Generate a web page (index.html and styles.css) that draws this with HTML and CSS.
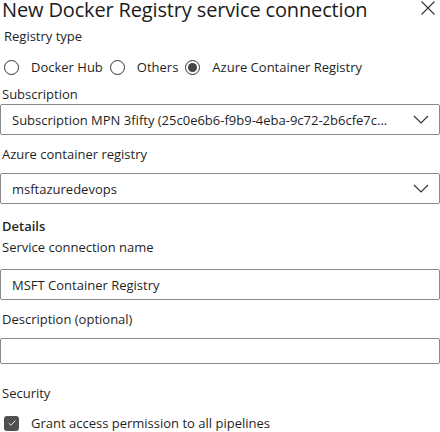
FILE: index.html
```html
<!DOCTYPE html>
<html>
<head>
<meta charset="utf-8">
<link rel="stylesheet" href="styles.css">
</head>
<body>
<div class="panel">
  <div class="header">
    <h1 class="title">New Docker Registry service connection</h1>
    <svg class="close" width="16" height="16" viewBox="0 0 16 16"><path d="M1.5 1.5L14.5 14.5M14.5 1.5L1.5 14.5" stroke="#333" stroke-width="1.1" fill="none"/></svg>
  </div>
  <div class="label reg-type">Registry type</div>
  <div class="radios">
    <span class="radio"></span><span class="radio-text">Docker Hub</span>
    <span class="radio"></span><span class="radio-text">Others</span>
    <span class="radio checked"></span><span class="radio-text">Azure Container Registry</span>
  </div>
  <div class="label sub-label">Subscription</div>
  <div class="field sub-field">
    <span class="value">Subscription MPN 3fifty (25c0e6b6-f9b9-4eba-9c72-2b6cfe7c...</span>
    <svg class="chev" width="16" height="9" viewBox="0 0 16 9"><path d="M1 1L8 8L15 1" stroke="#333" stroke-width="1.2" fill="none"/></svg>
  </div>
  <div class="label acr-label">Azure container registry</div>
  <div class="field acr-field">
    <span class="value">msftazuredevops</span>
    <svg class="chev" width="16" height="9" viewBox="0 0 16 9"><path d="M1 1L8 8L15 1" stroke="#333" stroke-width="1.2" fill="none"/></svg>
  </div>
  <div class="section">Details</div>
  <div class="label name-label">Service connection name</div>
  <div class="field name-field"><span class="value">MSFT Container Registry</span></div>
  <div class="label desc-label">Description (optional)</div>
  <div class="field desc-field"></div>
  <div class="label security">Security</div>
  <div class="check-row">
    <span class="checkbox"><svg width="10" height="10" viewBox="0 0 10 10"><path d="M1.8 5.2L4 7.3L8.3 2.6" stroke="#e6e6e6" stroke-width="1" fill="none"/></svg></span>
    <span class="check-text">Grant access permission to all pipelines</span>
  </div>
</div>
</body>
</html>
```
FILE: styles.css
```css
html, body {
  margin: 0;
  padding: 0;
  background: #fff;
}
body {
  font-family: "Open Sans", "Noto Sans", sans-serif;
  color: #1f1f1f;
  font-size: 13px;
}
.panel {
  width: 440px;
  display: flex;
  flex-direction: column;
}
.header {
  display: flex;
  justify-content: space-between;
  align-items: flex-start;
  height: 22px;
}
.title {
  margin: 0 0 0 2px;
  font-size: 20px;
  font-weight: 400;
  line-height: 20px;
  color: #1b1b1b;
  letter-spacing: -0.15px;
  white-space: nowrap;
}
.close {
  margin: 0 4px 0 0;
}
.label {
  line-height: 18px;
  margin-left: 2px;
}
.reg-type {
  margin-top: 5px;
  margin-left: 4px;
}
.radios {
  display: flex;
  align-items: center;
  height: 22px;
  margin-top: 11px;
  margin-left: 4px;
}
.radio {
  width: 13px;
  height: 13px;
  border: 1px solid #333;
  border-radius: 50%;
  display: inline-flex;
  align-items: center;
  justify-content: center;
}
.radio.checked::after {
  content: "";
  width: 9px;
  height: 9px;
  border-radius: 50%;
  background: #444;
}
.radio-text {
  margin: 0 7px 0 12px;
}
.radios .radio-text:last-child { margin-right: 0; }
.field {
  height: 31px;
  border: 1px solid #8a8a8a;
  border-radius: 2px;
  box-sizing: border-box;
  display: flex;
  align-items: center;
  padding: 0 10px 0 11px;
}
.value {
  flex: 1;
  white-space: nowrap;
  overflow: hidden;
}
.chev { margin-left: 8px; }
.sub-label { margin-top: 7px; }
.sub-field { margin-top: 1px; }
.acr-label { margin-top: 10px; }
.acr-field { margin-top: 10px; }
.section {
  font-weight: 600;
  margin-top: 13px;
  margin-left: 2px;
  line-height: 18px;
}
.name-label { margin-top: 3px; }
.name-field { margin-top: 13px; }
.desc-label { margin-top: 10px; }
.desc-field { margin-top: 10px; height: 26px; }
.security { margin-top: 20px; }
.check-row {
  display: flex;
  align-items: center;
  margin-top: 12px;
  margin-left: 4px;
  height: 18px;
}
.checkbox {
  width: 15px;
  height: 15px;
  border-radius: 3px;
  background: #505050;
  display: inline-flex;
  align-items: center;
  justify-content: center;
}
.check-text { margin-left: 12px; }
```
